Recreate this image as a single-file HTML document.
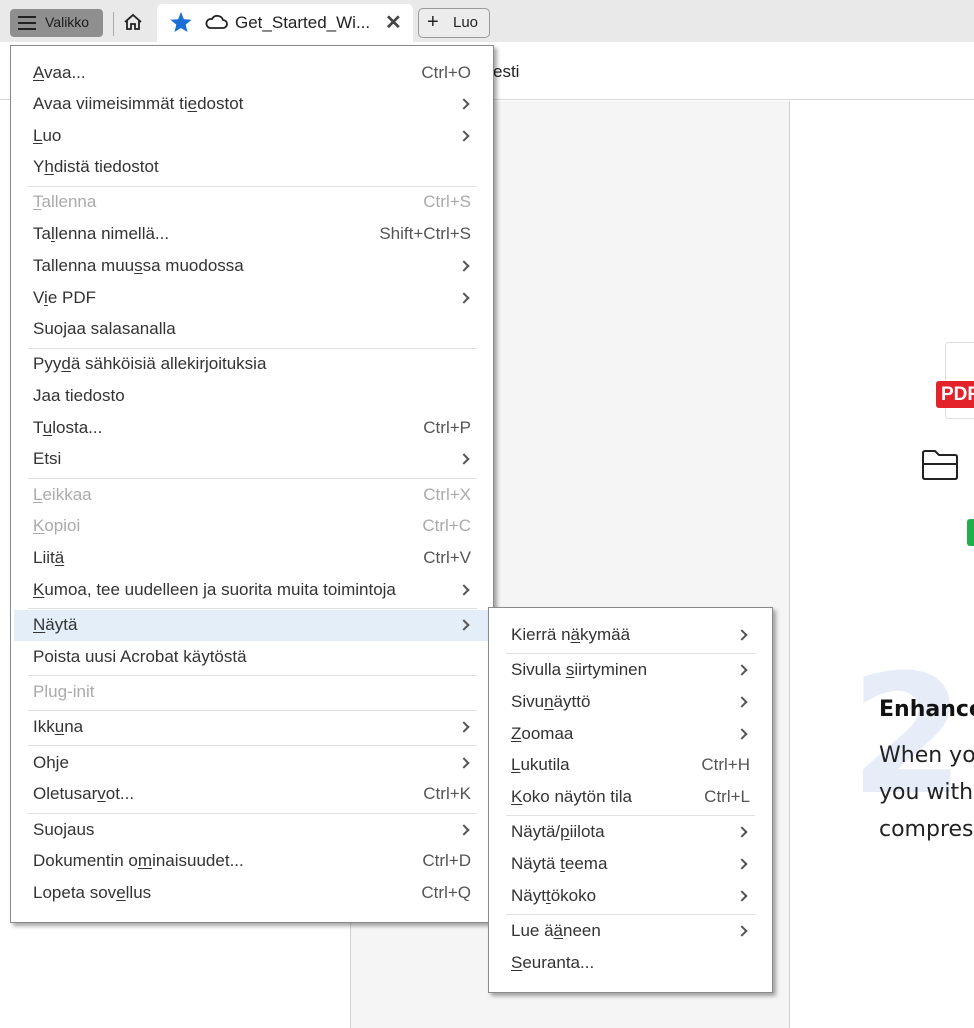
<!DOCTYPE html>
<html><head><meta charset="utf-8"><style>
*{margin:0;padding:0;box-sizing:border-box}
body{width:974px;height:1028px;position:relative;overflow:hidden;background:#fff;font-family:"Liberation Sans",Arial,sans-serif;color:#2c2c2c}
.abs{position:absolute}
.tabbar{left:0;top:0;width:974px;height:42px;background:#e9e9e9}
.menu{position:absolute;background:#fff;border:1px solid #8a8a8a;box-shadow:3px 3px 4px rgba(0,0,0,.35)}
.it{position:absolute;left:22px;height:20px;line-height:20px;font-size:17px;color:#333;white-space:nowrap}
.sc{position:absolute;height:20px;line-height:20px;font-size:17px;color:#555;text-align:right;white-space:nowrap}
.ar{position:absolute;width:8px;height:12px;margin-top:4px}
.ar::before{content:"";position:absolute;left:0;top:2px;width:6px;height:6px;border-right:2px solid #555;border-top:2px solid #555;transform:rotate(45deg)}
.dis{color:#aaa!important}
.sep{position:absolute;height:1px;background:#e0e0e0}
u{text-decoration:underline;text-underline-offset:2px}
</style></head><body>
<div class="abs tabbar"></div>
<div class="abs" style="left:10px;top:9px;width:93px;height:28px;background:#8f8f8f;border-radius:4px"></div>
<svg class="abs" style="left:17px;top:14px" width="20" height="18"><path d="M1 3H19M1 9H19M1 15H19" stroke="#222" stroke-width="2"/></svg>
<div class="abs" style="left:45px;top:14px;font-size:14px;color:#1a1a1a">Valikko</div>
<div class="abs" style="left:113px;top:12px;width:1px;height:24px;background:#aaa"></div>
<svg class="abs" style="left:122px;top:12px" width="22" height="20"><path d="M3 10L11 3L19 10M5 8V17H9V12H13V17H17V8" fill="none" stroke="#222" stroke-width="1.8"/></svg>
<div class="abs" style="left:157px;top:4px;width:256px;height:38px;background:#fff;border-radius:5px 5px 0 0"></div>
<svg class="abs" style="left:169px;top:11px" width="24" height="22"><path d="M12 1L14.9 8.2L22.6 8.7L16.7 13.6L18.5 21L12 17L5.5 21L7.3 13.6L1.4 8.7L9.1 8.2Z" fill="#1a6fd6"/></svg>
<svg class="abs" style="left:204px;top:14px" width="24" height="16"><path d="M6 14H19A4 4 0 0 0 19 6A6 6 0 0 0 8 5A4.5 4.5 0 0 0 6 14Z" fill="none" stroke="#222" stroke-width="1.8"/></svg>
<div class="abs" style="left:235px;top:13px;font-size:17px;color:#222">Get_Started_Wi...</div>
<div class="abs" style="left:385px;top:10px;font-size:20px;color:#444;font-weight:bold">✕</div>
<div class="abs" style="left:418px;top:8px;width:72px;height:30px;border:1px solid #999;border-radius:5px;background:#ececec"></div>
<div class="abs" style="left:427px;top:11px;font-size:20px;color:#222">+</div>
<div class="abs" style="left:453px;top:14px;font-size:15px;color:#222">Luo</div>

<div class="abs" style="left:0;top:42px;width:974px;height:58px;background:#fff;border-bottom:1px solid #d8d8d8"></div>
<div class="abs" style="left:493px;top:62px;font-size:17px;color:#222">esti</div>
<div class="abs" style="left:350px;top:101px;width:440px;height:927px;background:#f5f5f5;border-left:1px solid #d0d0d0;border-right:1px solid #d0d0d0"></div>
<div class="abs" style="left:945px;top:342px;width:40px;height:77px;border:1px solid #ddd;border-radius:3px"></div>
<div class="abs" style="left:936px;top:381px;width:50px;height:27px;background:#e2232a;border-radius:3px;color:#fff;font-weight:bold;font-size:19px;line-height:27px;padding-left:5px">PDF</div>
<svg class="abs" style="left:921px;top:448px" width="38" height="34"><path d="M4 3H14L18 7H34Q36 7 36 9V29Q36 31 34 31H4Q2 31 2 29V5Q2 3 4 3ZM2 16H36" fill="none" stroke="#222" stroke-width="2" stroke-linejoin="round"/></svg>
<div class="abs" style="left:967px;top:519px;width:10px;height:27px;background:#20b04a;border-radius:3px"></div>
<div class="abs" style="left:850px;top:650px;font-size:165px;font-weight:bold;color:#e6ecf8;font-family:'DejaVu Sans',sans-serif;line-height:170px">2</div>
<div class="abs" style="left:879px;top:697px;font-size:22px;font-weight:bold;color:#111;font-family:'DejaVu Sans',sans-serif;white-space:nowrap">Enhance</div>
<div class="abs" style="left:879px;top:737px;font-size:22px;color:#222;line-height:37px;font-family:'DejaVu Sans',sans-serif;white-space:nowrap">When you<br>you with<br>compres</div>

<div class="menu" style="left:10px;top:45px;width:484px;height:878px">
<div class="it" style="top:17px"><u>A</u>vaa...</div><div class="sc" style="right:22px;top:17px">Ctrl+O</div>
<div class="it" style="top:48px">Avaa viimeisimmät ti<u>e</u>dostot</div><div class="ar" style="left:449px;top:48px"></div>
<div class="it" style="top:80px"><u>L</u>uo</div><div class="ar" style="left:449px;top:80px"></div>
<div class="it" style="top:111px">Y<u>h</u>distä tiedostot</div>
<div class="sep" style="left:17px;width:449px;top:140px"></div>
<div class="it dis" style="top:146px"><u>T</u>allenna</div><div class="sc dis" style="right:22px;top:146px">Ctrl+S</div>
<div class="it" style="top:178px">Ta<u>l</u>lenna nimellä...</div><div class="sc" style="right:22px;top:178px">Shift+Ctrl+S</div>
<div class="it" style="top:210px">Tallenna muu<u>s</u>sa muodossa</div><div class="ar" style="left:449px;top:210px"></div>
<div class="it" style="top:242px">V<u>i</u>e PDF</div><div class="ar" style="left:449px;top:242px"></div>
<div class="it" style="top:273px">Suojaa salasanalla</div>
<div class="sep" style="left:17px;width:449px;top:302px"></div>
<div class="it" style="top:308px">Pyy<u>d</u>ä sähköisiä allekirjoituksia</div>
<div class="it" style="top:340px">Jaa tiedosto</div>
<div class="it" style="top:372px">T<u>u</u>losta...</div><div class="sc" style="right:22px;top:372px">Ctrl+P</div>
<div class="it" style="top:403px">Etsi</div><div class="ar" style="left:449px;top:403px"></div>
<div class="sep" style="left:17px;width:449px;top:432px"></div>
<div class="it dis" style="top:439px"><u>L</u>eikkaa</div><div class="sc dis" style="right:22px;top:439px">Ctrl+X</div>
<div class="it dis" style="top:470px"><u>K</u>opioi</div><div class="sc dis" style="right:22px;top:470px">Ctrl+C</div>
<div class="it" style="top:502px">Liit<u>ä</u></div><div class="sc" style="right:22px;top:502px">Ctrl+V</div>
<div class="it" style="top:534px"><u>K</u>umoa, tee uudelleen ja suorita muita toimintoja</div><div class="ar" style="left:449px;top:534px"></div>
<div class="sep" style="left:17px;width:449px;top:562px"></div>
<div style="position:absolute;left:3px;top:564px;width:478px;height:31px;background:#e4eef9"></div>
<div class="it" style="top:569px"><u>N</u>äytä</div><div class="ar" style="left:449px;top:569px"></div>
<div class="it" style="top:601px">Poista uusi Acrobat käytöstä</div>
<div class="sep" style="left:17px;width:449px;top:629px"></div>
<div class="it dis" style="top:636px">Plu<u>g</u>-init</div>
<div class="sep" style="left:17px;width:449px;top:664px"></div>
<div class="it" style="top:671px">Ikk<u>u</u>na</div><div class="ar" style="left:449px;top:671px"></div>
<div class="sep" style="left:17px;width:449px;top:699px"></div>
<div class="it" style="top:707px">Ohje</div><div class="ar" style="left:449px;top:707px"></div>
<div class="it" style="top:738px">Oletusar<u>v</u>ot...</div><div class="sc" style="right:22px;top:738px">Ctrl+K</div>
<div class="sep" style="left:17px;width:449px;top:767px"></div>
<div class="it" style="top:774px">Suojaus</div><div class="ar" style="left:449px;top:774px"></div>
<div class="it" style="top:805px">Dokumentin o<u>m</u>inaisuudet...</div><div class="sc" style="right:22px;top:805px">Ctrl+D</div>
<div class="it" style="top:837px">Lopeta sov<u>e</u>llus</div><div class="sc" style="right:22px;top:837px">Ctrl+Q</div>
</div>

<div class="menu" style="left:488px;top:607px;width:285px;height:386px">
<div class="it" style="top:17px">Kierrä n<u>ä</u>kymää</div><div class="ar" style="left:249px;top:17px"></div>
<div class="sep" style="left:17px;width:249px;top:45px"></div>
<div class="it" style="top:52px">Sivulla <u>s</u>iirtyminen</div><div class="ar" style="left:249px;top:52px"></div>
<div class="it" style="top:84px">Sivu<u>n</u>äyttö</div><div class="ar" style="left:249px;top:84px"></div>
<div class="it" style="top:116px"><u>Z</u>oomaa</div><div class="ar" style="left:249px;top:116px"></div>
<div class="it" style="top:147px"><u>L</u>ukutila</div><div class="sc" style="right:22px;top:147px">Ctrl+H</div>
<div class="it" style="top:179px"><u>K</u>oko näytön tila</div><div class="sc" style="right:22px;top:179px">Ctrl+L</div>
<div class="sep" style="left:17px;width:249px;top:207px"></div>
<div class="it" style="top:214px">Näytä/<u>p</u>iilota</div><div class="ar" style="left:249px;top:214px"></div>
<div class="it" style="top:246px">Näytä <u>t</u>eema</div><div class="ar" style="left:249px;top:246px"></div>
<div class="it" style="top:278px">Näyt<u>t</u>ökoko</div><div class="ar" style="left:249px;top:278px"></div>
<div class="sep" style="left:17px;width:249px;top:306px"></div>
<div class="it" style="top:313px">Lue ä<u>ä</u>neen</div><div class="ar" style="left:249px;top:313px"></div>
<div class="it" style="top:345px"><u>S</u>euranta...</div>
</div>
</body></html>
